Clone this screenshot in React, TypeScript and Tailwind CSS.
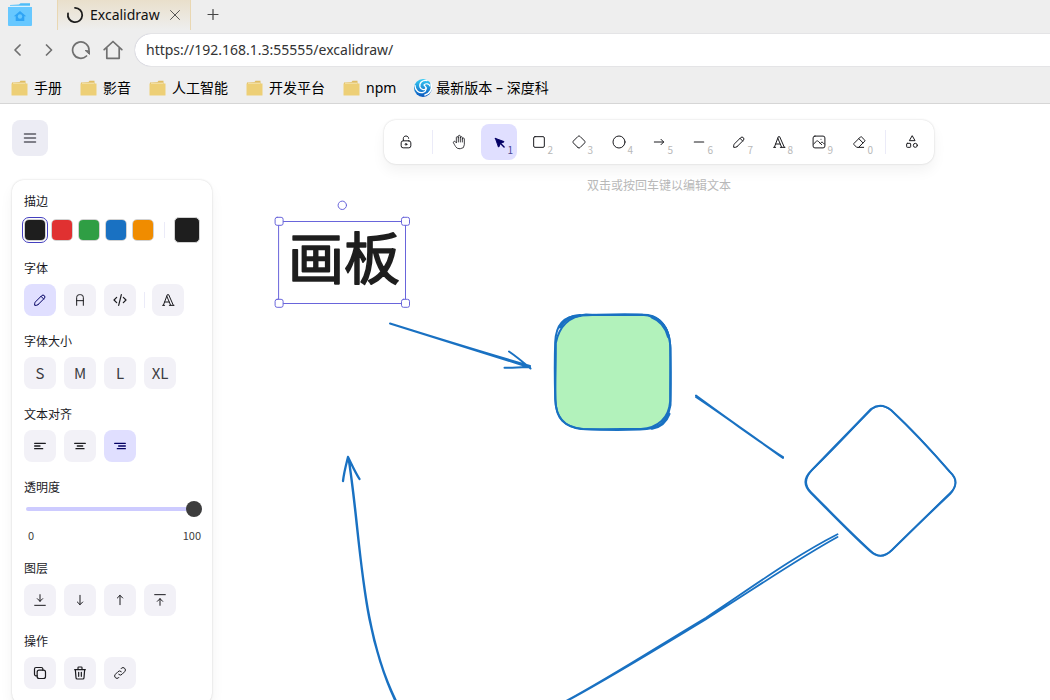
import type { ReactNode } from "react";

type IconProps = { children: ReactNode; box?: number; width?: number; className?: string };

function Icon({ children, box = 24, width = 1.5, className = "size-4" }: IconProps) {
  return (
    <svg
      className={className}
      viewBox={`0 0 ${box} ${box}`}
      fill="none"
      stroke="currentColor"
      strokeWidth={width}
      strokeLinecap="round"
      strokeLinejoin="round"
      aria-hidden="true"
    >
      {children}
    </svg>
  );
}

const pencil = (
  <Icon box={20} width={1.25}>
    <path d="m7.643 15.69 7.774-7.773a2.357 2.357 0 1 0-3.334-3.334L4.31 12.357a3.333 3.333 0 0 0-.977 2.357v1.953h1.953c.884 0 1.732-.352 2.357-.977Z" />
    <path d="m11.25 5.417 3.333 3.333" />
  </Icon>
);

const typography = (
  <Icon>
    <path d="M4 20h3M14 20h7M6.9 15h6.9M10.2 6.3 16 20M5 20l6-16h2l7 16" />
  </Icon>
);

const tools: { label: string; key: string; icon: ReactNode }[] = [
  {
    label: "选择",
    key: "1",
    icon: (
      <Icon box={22} width={1.25}>
        <g fill="currentColor">
          <path d="M6 6l4.153 11.793a.365.365 0 0 0 .331.207.366.366 0 0 0 .332-.207l2.184-4.793 4.787-1.994a.355.355 0 0 0 .213-.323.355.355 0 0 0-.213-.323L6 6z" />
          <path d="M13.5 13.5 18 18" strokeWidth={2} />
        </g>
      </Icon>
    ),
  },
  { label: "矩形", key: "2", icon: <Icon><rect x="4" y="4" width="16" height="16" rx="2" /></Icon> },
  {
    label: "菱形",
    key: "3",
    icon: (
      <Icon>
        <path d="M10.5 20.4l-6.9-6.9c-.781-.781-.781-2.219 0-3l6.9-6.9c.781-.781 2.219-.781 3 0l6.9 6.9c.781.781.781 2.219 0 3l-6.9 6.9c-.781.781-2.219.781-3 0z" />
      </Icon>
    ),
  },
  { label: "椭圆", key: "4", icon: <Icon><circle cx="12" cy="12" r="9" /></Icon> },
  { label: "箭头", key: "5", icon: <Icon><path d="M5 12h14M15 16l4-4-4-4" /></Icon> },
  { label: "线条", key: "6", icon: <Icon box={20}><path d="M4.167 10h11.666" /></Icon> },
  { label: "自由书写", key: "7", icon: pencil },
  { label: "文字", key: "8", icon: typography },
  {
    label: "插入图像",
    key: "9",
    icon: (
      <Icon box={20} width={1.25}>
        <path d="M12.5 6.667h.01" />
        <path d="M4.91 2.625h10.18a2.284 2.284 0 0 1 2.285 2.284v10.182a2.284 2.284 0 0 1-2.284 2.284H4.909a2.284 2.284 0 0 1-2.284-2.284V4.909a2.284 2.284 0 0 1 2.284-2.284Z" />
        <path d="m3.333 12.5 3.334-3.333c.773-.745 1.726-.745 2.5 0l4.166 4.166" />
        <path d="m11.667 11.667.833-.834c.774-.744 1.726-.744 2.5 0l1.667 1.667" />
      </Icon>
    ),
  },
  {
    label: "橡皮",
    key: "0",
    icon: (
      <Icon>
        <path d="M19 20H8.5l-4.21-4.3a1 1 0 0 1 0-1.41l10-10a1 1 0 0 1 1.41 0l5 5a1 1 0 0 1 0 1.41L11.5 20M18 13.3 11.7 7" />
      </Icon>
    ),
  },
];

function ToolButton({ label, children }: { label: string; children: ReactNode }) {
  return (
    <button type="button" aria-label={label} className="flex size-9 items-center justify-center rounded-lg text-[#1b1b1f]">
      {children}
    </button>
  );
}

function Toolbar() {
  return (
    <div className="flex items-center gap-1 rounded-xl bg-white p-1 shadow-[0_0_2px_rgba(0,0,0,0.18),0_7px_14px_rgba(0,0,0,0.05)]">
      <ToolButton label="保持所选工具">
        <Icon box={20} width={1.25}>
          <path d="M13.542 8.542H6.458a2.5 2.5 0 0 0-2.5 2.5v3.75a2.5 2.5 0 0 0 2.5 2.5h7.084a2.5 2.5 0 0 0 2.5-2.5v-3.75a2.5 2.5 0 0 0-2.5-2.5Z" />
          <circle cx="10" cy="12.917" r="1.042" />
          <path d="M6.667 8.333V5.417C6.667 3.806 8.159 2.5 10 2.5c1.841 0 3.333 1.306 3.333 2.917" />
        </Icon>
      </ToolButton>
      <div className="mx-1 h-6 w-px bg-[#ebebf8]" />
      <ToolButton label="抓手">
        <Icon width={1.25}>
          <path d="M8 13V5.5a1.5 1.5 0 0 1 3 0V12M11 5.5v-2a1.5 1.5 0 1 1 3 0V12M14 5.5a1.5 1.5 0 0 1 3 0V12" />
          <path d="M17 7.5a1.5 1.5 0 0 1 3 0V16a6 6 0 0 1-6 6h-2 .208a6 6 0 0 1-5.012-2.7L7 19c-.312-.479-1.407-2.388-3.286-5.728a1.5 1.5 0 0 1 .536-2.022 1.867 1.867 0 0 1 2.28.28L8 13" />
        </Icon>
      </ToolButton>
      {tools.map((tool, i) => (
        <button
          key={tool.key}
          type="button"
          aria-label={tool.label}
          className={
            i === 0
              ? "relative flex size-9 items-center justify-center rounded-lg bg-[#e0dfff] text-[#030064]"
              : "relative flex size-9 items-center justify-center rounded-lg text-[#1b1b1f]"
          }
        >
          {tool.icon}
          <span
            className={
              i === 0
                ? "absolute right-1 bottom-1 text-[10px] leading-3 text-[#4a4795]"
                : "absolute right-1 bottom-1 text-[10px] leading-3 text-[#b8b8b8]"
            }
          >
            {tool.key}
          </span>
        </button>
      ))}
      <div className="mx-1 h-6 w-px bg-[#ebebf8]" />
      <ToolButton label="更多工具">
        <Icon>
          <path d="M12 3l-4 7h8z" />
          <circle cx="17" cy="17" r="3" />
          <rect x="4" y="14" width="6" height="6" rx="1" />
        </Icon>
      </ToolButton>
    </div>
  );
}

function Section({ title, children }: { title: string; children: ReactNode }) {
  return (
    <section className="flex flex-col gap-[7px]">
      <h2 className="text-xs leading-[18px] text-[#1b1b1f]">{title}</h2>
      {children}
    </section>
  );
}

function PanelButton({ label, active, children }: { label: string; active?: boolean; children: ReactNode }) {
  return (
    <button
      type="button"
      aria-label={label}
      aria-pressed={active}
      className={
        active
          ? "flex size-8 items-center justify-center rounded-lg bg-[#e0dfff] text-[#030064]"
          : "flex size-8 items-center justify-center rounded-lg bg-[#f2f1f7] text-[#1b1b1f]"
      }
    >
      {children}
    </button>
  );
}

const swatches = [
  { label: "黑", color: "bg-[#1e1e1e]" },
  { label: "红", color: "bg-[#e03131]" },
  { label: "绿", color: "bg-[#2f9e44]" },
  { label: "蓝", color: "bg-[#1971c2]" },
  { label: "橙", color: "bg-[#f08c00]" },
];

const alignments = [
  { label: "左对齐", d: "M4 8h16M4 12h8M4 16h12" },
  { label: "居中", d: "M4 8h16M8 12h8M6 16h12" },
  { label: "右对齐", d: "M4 8h16M10 12h10M8 16h12" },
];

const layers = [
  { label: "置于底层", d: "M4 20h16M12 4v10M16 10l-4 4-4-4" },
  { label: "下移一层", d: "M12 5v14M16 15l-4 4-4-4" },
  { label: "上移一层", d: "M12 5v14M16 9l-4-4-4 4" },
  { label: "置于顶层", d: "M4 4h16M12 20V10M16 14l-4-4-4 4" },
];

function PropertiesPanel() {
  return (
    <aside className="flex flex-col gap-4 rounded-xl bg-white px-3 pt-3 pb-4 shadow-[0_0_2px_rgba(0,0,0,0.18),0_7px_14px_rgba(0,0,0,0.05)]">
      <Section title="描边">
        <div className="flex h-[26px] items-center justify-between">
          <div className="flex gap-[5px]">
            {swatches.map((s, i) => (
              <button
                key={s.label}
                type="button"
                aria-label={s.label}
                className={
                  i === 0
                    ? "flex size-[22px] rounded-[5px] border border-[#d2d2d2] outline outline-offset-1 outline-[#4440bf]"
                    : "flex size-[22px] rounded-[5px] border border-[#d2d2d2]"
                }
              >
                <span className={`size-full rounded ${s.color}`} />
              </button>
            ))}
          </div>
          <div className="h-4 w-px bg-[#ebebf8]" />
          <button type="button" aria-label="描边颜色" className="size-[26px] rounded-[5px] border border-[#d2d2d2] bg-[#1e1e1e]" />
        </div>
      </Section>

      <Section title="字体">
        <div className="flex items-center gap-2">
          <PanelButton label="手写" active>{pencil}</PanelButton>
          <PanelButton label="普通">
            <Icon box={20} width={1.25}>
              <path d="M5.833 16.667v-10a3.333 3.333 0 0 1 3.334-3.334h1.666a3.333 3.333 0 0 1 3.334 3.334v10M5.833 10.833h8.334" />
            </Icon>
          </PanelButton>
          <PanelButton label="代码">
            <Icon box={20} width={1.5}>
              <path d="M5.833 6.667 2.5 10l3.333 3.333M14.167 6.667 17.5 10l-3.333 3.333M11.667 3.333 8.333 16.667" />
            </Icon>
          </PanelButton>
          <div className="-mr-px h-4 w-px bg-[#ebebf8]" />
          <PanelButton label="更多字体">{typography}</PanelButton>
        </div>
      </Section>

      <Section title="字体大小">
        <div className="flex gap-2">
          {["S", "M", "L", "XL"].map((size) => (
            <button
              key={size}
              type="button"
              className="flex size-8 items-center justify-center rounded-lg bg-[#f2f1f7] text-[15px] leading-5 text-[#3d3d42]"
            >
              {size}
            </button>
          ))}
        </div>
      </Section>

      <Section title="文本对齐">
        <div className="flex gap-2">
          {alignments.map((a, i) => (
            <PanelButton key={a.label} label={a.label} active={i === 2}>
              <Icon width={2}><path d={a.d} /></Icon>
            </PanelButton>
          ))}
        </div>
      </Section>

      <Section title="透明度">
        <div className="flex h-10 flex-col justify-between">
          <input
            type="range"
            aria-label="透明度"
            min={0}
            max={100}
            defaultValue={100}
            className="mr-[-2px] ml-[2px] h-3 appearance-none bg-transparent [&::-webkit-slider-runnable-track]:h-1 [&::-webkit-slider-runnable-track]:rounded-full [&::-webkit-slider-runnable-track]:bg-[#cdcbff] [&::-webkit-slider-thumb]:-mt-[6px] [&::-webkit-slider-thumb]:size-4 [&::-webkit-slider-thumb]:appearance-none [&::-webkit-slider-thumb]:rounded-full [&::-webkit-slider-thumb]:bg-[#3d3d3d]"
          />
          <div className="-mr-px flex justify-between pl-1 text-[11px] leading-4 text-[#3d3d3d]">
            <span>0</span>
            <span>100</span>
          </div>
        </div>
      </Section>

      <Section title="图层">
        <div className="flex gap-2">
          {layers.map((l) => (
            <PanelButton key={l.label} label={l.label}>
              <Icon><path d={l.d} /></Icon>
            </PanelButton>
          ))}
        </div>
      </Section>

      <Section title="操作">
        <div className="flex gap-2">
          <PanelButton label="复制">
            <Icon box={20} width={1.5}>
              <path d="M14.375 6.458H8.958a2.5 2.5 0 0 0-2.5 2.5v5.417a2.5 2.5 0 0 0 2.5 2.5h5.417a2.5 2.5 0 0 0 2.5-2.5V8.958a2.5 2.5 0 0 0-2.5-2.5Z" />
              <path d="M13.542 6.458V5a1.875 1.875 0 0 0-1.875-1.875H5A1.875 1.875 0 0 0 3.125 5v6.667A1.875 1.875 0 0 0 5 13.542h1.458" />
            </Icon>
          </PanelButton>
          <PanelButton label="删除">
            <Icon box={20} width={1.5}>
              <path d="M3.333 5.833h13.334M8.333 9.167v5M11.667 9.167v5M4.167 5.833l.833 10c0 .92.746 1.667 1.667 1.667h6.666c.92 0 1.667-.746 1.667-1.667l.833-10M7.5 5.833v-2.5c0-.46.373-.833.833-.833h3.334c.46 0 .833.373.833.833v2.5" />
            </Icon>
          </PanelButton>
          <PanelButton label="链接">
            <Icon box={20} width={1.25}>
              <path d="M8.333 11.667a2.917 2.917 0 0 0 4.167 0l3.333-3.334a2.946 2.946 0 1 0-4.166-4.166l-.417.416" />
              <path d="M11.667 8.333a2.917 2.917 0 0 0-4.167 0l-3.333 3.334a2.946 2.946 0 0 0 4.166 4.166l.417-.416" />
            </Icon>
          </PanelButton>
        </div>
      </Section>
    </aside>
  );
}

/* The group's offset turns window coordinates into canvas coordinates. */
function Drawing() {
  return (
    <svg className="absolute inset-0 size-full" fill="none" strokeLinecap="round" strokeLinejoin="round">
      <g transform="translate(0 -104)">
        <text
          x="288"
          y="279"
          fontSize="56"
          fill="#1e1e1e"
          stroke="#1e1e1e"
          strokeWidth="1.6"
          className="font-['Noto_Sans_CJK_SC',sans-serif] font-normal"
        >
          画板
        </text>
        <g stroke="#6965db" fill="#fff">
          <rect x="279" y="221.5" width="126.5" height="82" fill="none" />
          <circle cx="342.3" cy="205.3" r="4.2" />
          <rect x="275.1" y="217.3" width="8" height="8" rx="2" />
          <rect x="401.5" y="217.3" width="8" height="8" rx="2" />
          <rect x="275.1" y="299.3" width="8" height="8" rx="2" />
          <rect x="401.5" y="299.3" width="8" height="8" rx="2" />
        </g>
        <g stroke="#1971c2" strokeWidth="2">
          <path d="M390 323.5C437 338 484 353 530 367.5M390 323.5C438 338.5 482 352 530 366M509 351.5C517 357 523 362 530.500 368.500M504.5 367.800C513 368 521 367.5 530 367" />
          <path
            d="M586 314.5C604 315.5 624 314.800 642 314.800C660 316 669 326 670.200 345C670.5 364 670 383 670.200 401C669 418 658 428 641 429C622 429 602 429.5 583 429C564 427 556 419 555.5 400C555 382 556 362 555.8 343C559 327 568 316.500 586 314.500Z"
            fill="#b2f2bb"
          />
          <path d="M580 315.500C602 315 622 313 648 315C661 317 669.500 328 670.500 348C670.700 365 671.200 383 670.5 405C667 423 659 429.500 640 429.500C622 430.200 602 430 581 429C564 427 555.5 416 555.200 399C554.700 380 554.500 361 555.200 342C556 325 563 316 580 315.500" />
          <path d="M560 327C564 320 571 316 580 315.600M652 317C660 320 666 327 668.500 337M669 414C666 422 660 427 652 428.300" strokeWidth="3" />
          <path d="M696 395.5C725 417 754 437 783 458M696 397C726 417 754 438 783 457.200" />
          <path d="M871 409Q881 402 891 410C909 427 930 449 950 472Q961 482 950 494C930 513 910 532 892 550Q881 561 870 551C850 533 829 511 811 493Q800 482 811 471C830 451 851 430 871 409Z" />
          <path d="M872 409Q881 402 892 411C912 429 932 451 950 472Q961 483 950 493C930 512 911 532 892 550Q881 561 871 551C850 532 830 511 811 492Q801 482 812 470C831 452 851 430 872 409" strokeWidth="1.5" />
          <path d="M348.5 458C362 540 359 628 397 703M348.5 458C361 537 360 628 396.500 703M348 457C346 465 344 472 343 481M348 457C352 465 355 472 359.5 479" strokeWidth="2.300" />
          <path d="M837.5 534.3C793 557 751 588 706 617.7C660 645 614 675 566 701M837.5 537C794 561 751 591 706 619.2C660 647 613 676 567 701" strokeWidth="1.8" />
        </g>
      </g>
    </svg>
  );
}

function FolderIcon() {
  return (
    <svg className="h-4 w-[17px]" viewBox="0 0 17 16" aria-hidden="true">
      <path d="M1 2.5 8.5 2l1-1.2h5V4H1z" fill="#dfbd64" />
      <path d="M2 2.7h12V4H2z" fill="#f7ecc9" />
      <path d="M.5 3.5h16V15a.5.5 0 0 1-.5.5H1a.5.5 0 0 1-.5-.5z" fill="#edcf76" />
    </svg>
  );
}

function SwirlIcon() {
  return (
    <svg className="size-[18px]" viewBox="0 0 18 18" aria-hidden="true">
      <defs>
        <linearGradient id="swirl" x1="0" y1="0" x2="0" y2="1">
          <stop offset="0" stopColor="#35cdf5" />
          <stop offset="1" stopColor="#0a56bd" />
        </linearGradient>
      </defs>
      <circle cx="9" cy="9" r="9" fill="url(#swirl)" />
      <g fill="none" stroke="#fff" strokeLinecap="round">
        <path d="M13 1.5C8 1 5 4 6 8c1 3 5 3.5 6.5 1" strokeWidth="1.3" />
        <path d="M1 6.5c0 5 4 8 8 7 3.5-1 4-5 1.5-7" strokeWidth="1.3" />
        <path d="M17 5c1.500 5-1 9.500-6 11" strokeWidth="1.6" />
        <path d="M10 6c2-2 5-1.500 6 1" strokeWidth="1.2" />
      </g>
    </svg>
  );
}

const bookmarks = ["手册", "影音", "人工智能", "开发平台", "npm"];

function BrowserChrome() {
  return (
    <header className="flex flex-col border-b border-[#d6d6d6] bg-[#eeeeee]">
      <div className="flex h-[30px] items-center">
        <button type="button" aria-label="主页" className="mr-6 ml-2 flex">
          <svg className="h-6 w-[25px]" viewBox="0 0 25 24" aria-hidden="true">
            <path d="M2 2 11 1.5 12.5.3H22V5H2z" fill="#4dbcf8" />
            <path d="M2 2.700h20V5H2z" fill="#d8f1fe" />
            <path d="M0 4h24v18a1 1 0 0 1-1 1H1a1 1 0 0 1-1-1z" fill="#67c8ff" />
            <path d="m12 8-6.200 5.300h1.900V18h8.600v-4.700h1.900z" fill="#2fa4f5" />
            <circle cx="12" cy="13.5" r="2.2" fill="#67c8ff" />
          </svg>
        </button>
        <div className="flex h-full w-[134px] items-center border-x border-[#e9d7b2] bg-linear-to-b from-[#e9dfcb] to-[#eeeeee] pl-2">
          <Icon box={18} width={1.8} className="size-[18px]">
            <path d="M9 1.8A7.2 7.2 0 1 1 2 7.5" className="text-[#1c1c1c]" />
          </Icon>
          <span className="ml-[6px] text-sm text-[#111]">Excalidraw</span>
          <button type="button" aria-label="关闭标签页" className="ml-auto pr-[9px] text-[#555]">
            <Icon box={12} width={1} className="size-3">
              <path d="M1.5 1.5l9 9M10.5 1.5l-9 9" />
            </Icon>
          </button>
        </div>
        <button type="button" aria-label="新标签页" className="ml-4 text-[#444]">
          <Icon box={12} width={1.2} className="size-3">
            <path d="M6 .5v10M1 5.5h10" />
          </Icon>
        </button>
      </div>

      <div className="flex h-10 items-center">
        <div className="flex items-center pl-2 text-[#707070]">
          <button type="button" aria-label="后退" className="flex size-[18px] items-center justify-center">
            <Icon box={12} width={1.7} className="size-3"><path d="M9 1 4 6l5 5" /></Icon>
          </button>
          <button type="button" aria-label="前进" className="ml-[14px] flex size-[18px] items-center justify-center">
            <Icon box={12} width={1.7} className="size-3"><path d="m3.500 1 5 5-5 5" /></Icon>
          </button>
          <button type="button" aria-label="刷新" className="ml-[13px] flex size-5 items-center justify-center">
            <Icon box={20} width={1.7} className="size-5">
              <path d="M15.500 16A8.200 8.200 0 1 1 18 10.500" />
              <path d="M14.500 10.500 18.500 11v3z" fill="currentColor" strokeWidth="1" />
            </Icon>
          </button>
          <button type="button" aria-label="首页" className="ml-3 flex size-5 items-center justify-center">
            <Icon box={20} width={1.7} className="size-5">
              <path d="M1.200 9.700 10 1.500l8.800 8.200M3.800 8v10.300h12.400V8" />
            </Icon>
          </button>
        </div>
        <input
          type="text"
          aria-label="地址栏"
          defaultValue="https://192.168.1.3:55555/excalidraw/"
          className="ml-3 h-8 min-w-0 flex-1 rounded-l-full bg-white px-[11px] pb-[2px] text-sm text-[#333] shadow-[0_0_1px_rgba(60,60,110,0.5)] outline-none"
        />
      </div>

      <nav className="flex h-[33px] items-center gap-[18px] pt-[2px] pl-[11px] text-sm text-black">
        {bookmarks.map((name) => (
          <a key={name} href="#" className="flex items-center gap-[6px]">
            <FolderIcon />
            {name}
          </a>
        ))}
        <a href="#" className="flex items-center gap-1">
          <SwirlIcon />
          最新版本 – 深度科
        </a>
      </nav>
    </header>
  );
}

export default function App() {
  return (
    <div className="flex h-screen flex-col overflow-hidden bg-white font-['Noto_Sans','Noto_Sans_CJK_SC',sans-serif]">
      <BrowserChrome />
      <main className="relative min-h-0 flex-1 overflow-hidden font-['Noto_Sans_CJK_SC',sans-serif]">
        <Drawing />
        <div className="relative flex items-start pt-4 pl-3">
          <div className="flex w-[200px] shrink-0 flex-col gap-6">
            <button
              type="button"
              aria-label="菜单"
              className="flex size-9 items-center justify-center rounded-lg bg-[#ececf4] text-[#5b5b64]"
            >
              <Icon box={16} width={1.5}>
                <path d="M2.500 4h11M2.500 8h11M2.500 12h11" />
              </Icon>
            </button>
            <PropertiesPanel />
          </div>
          <div className="flex flex-1 flex-col items-center gap-3 pl-14">
            <Toolbar />
            <p className="text-xs leading-[18px] text-[#b8b8b8]">双击或按回车键以编辑文本</p>
          </div>
        </div>
      </main>
    </div>
  );
}
